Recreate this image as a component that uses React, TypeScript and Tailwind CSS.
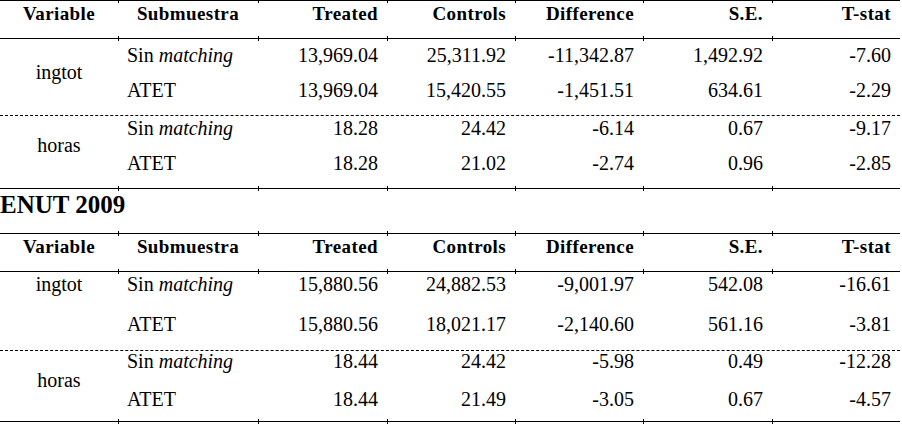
import React from "react";

type Row = { sub: "sin" | "atet"; vals: string[] };
type Group = { variable: string; rows: Row[] };

const cols = "grid grid-cols-[118px_140px_129px_128px_128px_129px_128px]";
const heads = ["Treated", "Controls", "Difference", "S.E.", "T-stat"];
const ticks = [118, 258, 387, 515, 643, 772];

const enut1: Group[] = [
  {
    variable: "ingtot",
    rows: [
      { sub: "sin", vals: ["13,969.04", "25,311.92", "-11,342.87", "1,492.92", "-7.60"] },
      { sub: "atet", vals: ["13,969.04", "15,420.55", "-1,451.51", "634.61", "-2.29"] },
    ],
  },
  {
    variable: "horas",
    rows: [
      { sub: "sin", vals: ["18.28", "24.42", "-6.14", "0.67", "-9.17"] },
      { sub: "atet", vals: ["18.28", "21.02", "-2.74", "0.96", "-2.85"] },
    ],
  },
];

const enut2: Group[] = [
  {
    variable: "ingtot",
    rows: [
      { sub: "sin", vals: ["15,880.56", "24,882.53", "-9,001.97", "542.08", "-16.61"] },
      { sub: "atet", vals: ["15,880.56", "18,021.17", "-2,140.60", "561.16", "-3.81"] },
    ],
  },
  {
    variable: "horas",
    rows: [
      { sub: "sin", vals: ["18.44", "24.42", "-5.98", "0.49", "-12.28"] },
      { sub: "atet", vals: ["18.44", "21.49", "-3.05", "0.67", "-4.57"] },
    ],
  },
];

// horizontal rule with the little column ticks word leaves on it
function Rule({ dashed }: { dashed?: boolean }) {
  if (dashed) return <div className="h-px border-t border-dashed border-black" />;
  return (
    <div className="relative h-px bg-black">
      {ticks.map((x) => (
        <span key={x} className="absolute top-[-2px] w-px h-[5px] bg-black" style={{ left: x }} />
      ))}
    </div>
  );
}

function Header({ pt }: { pt: string }) {
  return (
    <div className={`${cols} h-[37px] ${pt} text-[19px] leading-[20px] font-bold tracking-[0.4px]`}>
      <div className="text-center">Variable</div>
      <div className="text-center">Submuestra</div>
      {heads.map((h) => (
        <div key={h} className="text-right pr-[9px]">{h}</div>
      ))}
    </div>
  );
}

function Sub({ sub }: { sub: "sin" | "atet" }) {
  if (sub === "sin")
    return (
      <>
        Sin <i>matching</i>
      </>
    );
  return <>ATET</>;
}

// one variable block: name on the left spanning its two rows
function Block({ g, pt, rowH, varPt }: { g: Group; pt: string; rowH: string[]; varPt: string }) {
  return (
    <div className={`${cols} ${pt} text-[20px] leading-[20px]`}>
      <div className={`row-span-2 text-center ${varPt}`}>{g.variable}</div>
      {g.rows.map((r, i) => (
        <React.Fragment key={i}>
          <div className={`${rowH[i]} pl-[9px] whitespace-nowrap`}>
            <Sub sub={r.sub} />
          </div>
          {r.vals.map((v, j) => (
            <div key={j} className={`${rowH[i]} text-right pr-[9px]`}>
              {v}
            </div>
          ))}
        </React.Fragment>
      ))}
    </div>
  );
}

export default function App() {
  return (
    <div className="w-[902px] h-[426px] bg-white text-black font-['Liberation_Serif'] overflow-hidden">
      <div className="w-[900px]">
        <Rule />
        <Header pt="pt-[3px]" />
        <Rule />
        <Block g={enut1[0]} pt="pt-[6px]" rowH={["h-[35px]", "h-[35px]"]} varPt="pt-[17px]" />
        <Rule dashed />
        <Block g={enut1[1]} pt="pt-[2px]" rowH={["h-[35px]", "h-[35px]"]} varPt="pt-[17px]" />
        <Rule />

        <div className="h-[44px] pt-[3px] text-[25px] leading-[25px] font-bold">ENUT 2009</div>

        <Rule />
        <Header pt="pt-[3px]" />
        <Rule />
        <Block g={enut2[0]} pt="pt-[2px]" rowH={["h-[40px]", "h-[36px]"]} varPt="pt-0" />
        <Rule dashed />
        <Block g={enut2[1]} pt="pt-0" rowH={["h-[38px]", "h-[32px]"]} varPt="pt-[19px]" />
        <Rule />
      </div>
    </div>
  );
}
